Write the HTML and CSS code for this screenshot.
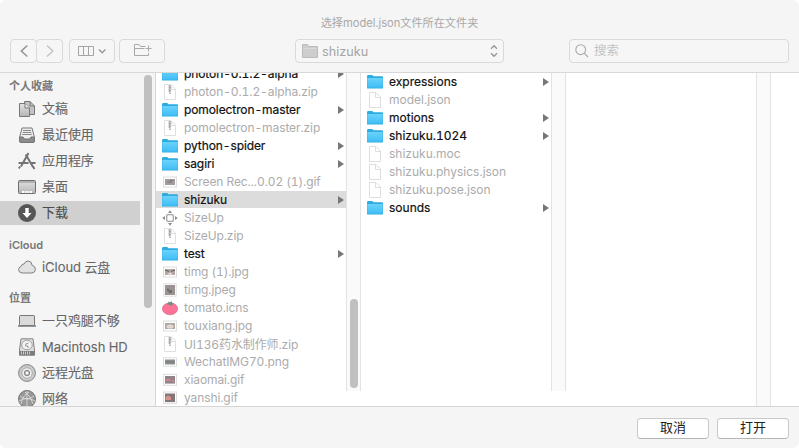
FILE: index.html
```html
<!DOCTYPE html>
<html lang="zh-CN">
<head>
<meta charset="utf-8">
<title>选择model.json文件所在文件夹</title>
<link rel="stylesheet" href="styles.css">
</head>
<body>
<svg class="defs" aria-hidden="true">
  <linearGradient id="blue" x1="0" y1="0" x2="0" y2="1"><stop offset="0" stop-color="#6bd3fb"/><stop offset="1" stop-color="#40bdf5"/></linearGradient>
  <linearGradient id="grey" x1="0" y1="0" x2="0" y2="1"><stop offset="0" stop-color="#e2e2e2"/><stop offset="1" stop-color="#b4b4b4"/></linearGradient>
  <symbol id="folder" viewBox="0 0 16 16"><path d="M0 2.5Q0 1 1 1H5.2L6.6 2.3H15Q16 2.3 16 3.3V14Q16 14.6 15.3 14.6H.7Q0 14.6 0 14Z" fill="#2dacdf"/><path d="M.3 4H15.7V13.7H.3Z" fill="url(#blue)"/></symbol>
  <symbol id="doc" viewBox="0 0 16 16"><path d="M2.500.5H9L13.500 5V15.500H2.500Z" fill="#fff" stroke="#dedede"/><path d="M8.500.8V5.500H13.500" fill="none" stroke="#dedede"/></symbol>
  <symbol id="zip" viewBox="0 0 16 16"><path d="M2.500.5H9L13.500 5V15.500H2.500Z" fill="#fff" stroke="#e0e0e0"/><path d="M9.500.8V5.500H13.500" fill="none" stroke="#dedede"/><path d="M7.500 1V8" stroke="#c4c4c4" stroke-width="2"/><path d="M8 1.500V10.500" stroke="#8e8e8e" stroke-width="1.300" stroke-dasharray="1 .5"/></symbol>
  <symbol id="pic" viewBox="0 0 16 16"><rect x="1.5" y="3" width="13" height="10" fill="#fff" stroke="#dedede"/><rect x="3" y="5" width="10" height="6" fill="#a39c9c"/><path d="M5 8H10M8 6.5H11" stroke="#777"/></symbol>
  <symbol id="pic-eyes" viewBox="0 0 16 16"><rect x="1.5" y="3" width="13" height="10" fill="#fff" stroke="#dedede"/><rect x="3" y="5" width="10" height="6" fill="#b3a7a5"/><path d="M3 6 7 7.5M13 6 9 7.5" stroke="#6d6265" stroke-width="1.2"/><path d="M5 10.5 8 8.5 11 10.5Z" fill="#f4e3df"/></symbol>
  <symbol id="pic-square" viewBox="0 0 16 16"><rect x="1.8" y="1.8" width="12.4" height="12.4" fill="#fff" stroke="#dedede"/><rect x="3" y="3" width="10" height="10" fill="#9b9292"/><path d="M5 6.5H7V8H10V11H6.5V9H5Z" fill="#746b6e"/></symbol>
  <symbol id="pic-face" viewBox="0 0 16 16"><rect x="1.5" y="3" width="13" height="10" fill="#fff" stroke="#dedede"/><rect x="3" y="5" width="10" height="6" fill="#b0a9a3"/><ellipse cx="8" cy="8.5" rx="3.5" ry="2" fill="#e6d8cf"/></symbol>
  <symbol id="pic-wide" viewBox="0 0 16 16"><rect x="1.5" y="3.7" width="13" height="8.5" fill="#fff" stroke="#dedede"/><rect x="3" y="5.5" width="10" height="5" fill="#8c9091"/><path d="M4 8H12" stroke="#747779"/></symbol>
  <symbol id="pic-red" viewBox="0 0 16 16"><rect x="1.5" y="2.3" width="13" height="11" fill="#fff" stroke="#dedede"/><rect x="3" y="4" width="10" height="7.6" fill="#918489"/><path d="M4 8H8.5M10 9H12" stroke="#d5838c" stroke-width="2"/></symbol>
  <symbol id="pic-orange" viewBox="0 0 16 16"><rect x="1.5" y="2" width="13" height="11.6" fill="#fff" stroke="#dedede"/><rect x="3" y="3.5" width="10" height="8.6" fill="#81777b"/><path d="M3.5 10V7L6 5.5 9 7V10Z" fill="#d99289"/></symbol>
  <symbol id="sizeup" viewBox="0 0 16 16"><rect x="4.7" y="4.7" width="6.6" height="6.6" rx="1" fill="#fff" stroke="#a2a2a2" stroke-width="1.3"/><path d="M8 .3 10 3H6ZM8 15.7 6 13h4ZM.2 8 3 6v4ZM15.8 8 13 10V6Z" fill="#8a8a8a"/></symbol>
  <symbol id="tomato" viewBox="0 0 16 16"><ellipse cx="8" cy="8.8" rx="7.7" ry="6" fill="#fb7397" stroke="#c9687f" stroke-width=".6"/><path d="M8 4.800 4.500 4.500 6.500 3 6 1.500 8 2.500 9.500 1 10 3 12 4 9.800 4.500 9 6Z" fill="#5f937c"/></symbol>
</svg>

<div class="dialog">
  <header class="top">
    <h1 class="title">选择model.json文件所在文件夹</h1>
    <div class="toolbar">
      <div class="nav">
        <button class="tool" aria-label="后退"><svg width="24" height="22" viewBox="0 0 24 22"><path d="M15.3 5.5 9.4 11l5.9 5.5" stroke="#999" stroke-width="1.7"/></svg></button>
        <button class="tool" aria-label="前进"><svg width="24" height="22" viewBox="0 0 24 22"><path d="M9 5.5 14.8 11 9 16.5" stroke="#c6c6c6" stroke-width="1.6"/></svg></button>
      </div>
      <button class="tool view" aria-label="分栏"><svg width="44" height="22" viewBox="0 0 44 22"><path d="M8.500 6.500H23.500V15.500H8.500ZM13.500 6.500V15.500M18.500 6.500V15.500" stroke="#a4a4a4"/><path d="M29 9.500 32.200 12.700 35.400 9.500" stroke="#999" stroke-width="1.5"/></svg></button>
      <button class="tool new" aria-label="新建文件夹"><svg width="44" height="22" viewBox="0 0 44 22"><path d="M25.500 6.500H20.500L19 4.500H14.500V15.500H28.500V13M14.500 8.500H24.500M28.500 5.500V11.500M25.500 8.500H31.500" stroke="#a9a9a9"/></svg></button>
      <button class="tool path">
        <svg width="16" height="14" viewBox="0 0 16 14"><path d="M.5 13.500V.5H5.500L7 2.500H15.500V13.500Z" fill="#cdcdcd" stroke="#bcbcbc"/><path d="M1 4.500H15" stroke="#dadada"/></svg>
        <span>shizuku</span>
        <svg class="stepper" width="8" height="14" viewBox="0 0 8 14"><path d="M1 4.700 4 1.700 7 4.700M1 9.300 4 12.300 7 9.300" stroke="#969696" stroke-width="1.4"/></svg>
      </button>
      <label class="tool search">
        <svg width="14" height="14" viewBox="0 0 14 14"><circle cx="5.700" cy="5.700" r="4.900" stroke="#aaa" stroke-width="1.100"/><path d="M9.200 9.200 13 13" stroke="#aaa" stroke-width="1.200"/></svg>
        <span>搜索</span>
      </label>
    </div>
  </header>

  <main class="body">
    <nav class="side">
      <div class="places">
        <h2>个人收藏</h2>
        <a class="place"><svg viewBox="0 0 18 18"><path d="M6.500 1.500H12L16.500 6V14.500H6.500Z" fill="#c4c4c4" stroke="#777"/><path d="M12 1.500V6H16.500" fill="none" stroke="#777"/><path d="M1.500 3.500H7L11.500 8V16.500H1.500Z" fill="url(#grey)" stroke="#777"/><path d="M7 3.500V8H11.500" fill="#eee" stroke="#777"/></svg><span class="cjk">文稿</span></a>
        <a class="place"><svg viewBox="0 0 18 18"><path d="M4 2H14L16.300 11V15.800H1.700V11Z" fill="#eee" stroke="#777"/><path d="M5 4.500H13M4.600 6.500H13.400M4.200 8.500H13.800" stroke="#888"/><path d="M1.700 11H5L6.500 13H11.500L13 11H16.300V15.500Q16.300 16.500 15 16.500H3Q1.700 16.500 1.700 15.500Z" fill="#8c8c8c" stroke="#757575"/></svg><span class="cjk">最近使用</span></a>
        <a class="place"><svg viewBox="0 0 18 18"><path d="M10.500 1 3 14.500M7.700 2.500 15 15M.5 11H10.500M13.500 11H17.500M2 14.500.8 16.500M15 14.500 16.500 17" fill="none" stroke="#737373" stroke-width="2"/></svg><span class="cjk">应用程序</span></a>
        <a class="place"><svg viewBox="0 0 18 18"><rect x=".5" y="2.500" width="17" height="13" rx="1" fill="url(#grey)" stroke="#6e6e6e"/><path d="M1 4H17" stroke="#858585"/><path d="M4 14H14" stroke="#fff" stroke-width="2" stroke-dasharray="2 .7"/></svg><span class="cjk">桌面</span></a>
        <a class="place selected"><svg viewBox="0 0 18 18"><circle cx="9" cy="9" r="9" fill="#565656"/><path d="M7.300 4H10.700V9H13.500L9 14 4.500 9H7.300Z" fill="#fff"/></svg><span class="cjk">下载</span></a>
        <h2 class="cloud">iCloud</h2>
        <a class="place"><svg viewBox="0 0 18 18"><path d="M4 15Q.6 14.700.6 11.600.6 9 3.300 8.300 3.600 5.800 6 6 7.300 2.800 10.300 3 14 3.400 14.200 7.500 17.400 8 17.400 11.400 17.200 14.700 14 15Z" fill="#e2e2e2" stroke="#808080"/></svg>iCloud 云盘</a>
        <h2 class="where">位置</h2>
        <a class="place"><svg viewBox="0 0 18 18"><rect x="1.500" y="3.500" width="15" height="10" rx=".7" fill="#dadada" stroke="#777"/><path d="M0 14H18" stroke="#777" stroke-width="1.500"/></svg><span class="cjk">一只鸡腿不够</span></a>
        <a class="place"><svg viewBox="0 0 18 18"><path d="M3 .8H15L16.500 12V17.300H1.500V12Z" fill="#dedede" stroke="#858585"/><ellipse cx="9" cy="7" rx="5.300" ry="4.800" fill="#f2f2f2" stroke="#a0a0a0"/><path d="M10.500 5Q7 5 7.500 8H10V10" fill="none" stroke="#999"/><path d="M1.500 13H16.500V17H1.500Z" fill="#7b7b7b"/><path d="M3 15H12" stroke="#c8c8c8" stroke-width="3" stroke-dasharray="1 1"/></svg>Macintosh HD</a>
        <a class="place"><svg viewBox="0 0 18 18"><circle cx="9" cy="9" r="8.400" fill="#cbcbcb" stroke="#838383"/><circle cx="9" cy="9" r="5.300" fill="#eee" stroke="#aaa"/><circle cx="9" cy="9" r="2.700" fill="#bbb" stroke="#888"/><circle cx="9" cy="9" r="1.200" fill="#fff"/></svg><span class="cjk">远程光盘</span></a>
        <a class="place"><svg viewBox="0 0 18 18"><circle cx="9" cy="9" r="8.500" fill="#989898" stroke="#777"/><path d="M2 6Q9 12 16 6M9 1V17M3 14Q5 5 11 2M15 14Q13 6 7 2M1 11Q9 6 17 11" fill="none" stroke="#e0e0e0" stroke-width=".8"/></svg><span class="cjk">网络</span></a>
      </div>
      <i class="thumb"></i>
    </nav>

    <section class="column first">
      <ul class="files">
        <li class="dir"><svg><use href="#folder"/></svg>photon-0.1.2-alpha</li>
        <li><svg><use href="#zip"/></svg>photon-0.1.2-alpha.zip</li>
        <li class="dir"><svg><use href="#folder"/></svg>pomolectron-master</li>
        <li><svg><use href="#zip"/></svg>pomolectron-master.zip</li>
        <li class="dir"><svg><use href="#folder"/></svg>python-spider</li>
        <li class="dir"><svg><use href="#folder"/></svg>sagiri</li>
        <li><svg><use href="#pic"/></svg>Screen Rec...0.02 (1).gif</li>
        <li class="dir selected"><svg><use href="#folder"/></svg>shizuku</li>
        <li><svg><use href="#sizeup"/></svg>SizeUp</li>
        <li><svg><use href="#zip"/></svg>SizeUp.zip</li>
        <li class="dir"><svg><use href="#folder"/></svg>test</li>
        <li><svg><use href="#pic-eyes"/></svg>timg (1).jpg</li>
        <li><svg><use href="#pic-square"/></svg>timg.jpeg</li>
        <li><svg><use href="#tomato"/></svg>tomato.icns</li>
        <li><svg><use href="#pic-face"/></svg>touxiang.jpg</li>
        <li><svg><use href="#zip"/></svg>UI136药水制作师.zip</li>
        <li><svg><use href="#pic-wide"/></svg>WechatIMG70.png</li>
        <li><svg><use href="#pic-red"/></svg>xiaomai.gif</li>
        <li><svg><use href="#pic-orange"/></svg>yanshi.gif</li>
      </ul>
      <div class="track"><i class="thumb"></i></div>
    </section>
    <section class="column">
      <ul class="files">
        <li class="dir"><svg><use href="#folder"/></svg>expressions</li>
        <li><svg><use href="#doc"/></svg>model.json</li>
        <li class="dir"><svg><use href="#folder"/></svg>motions</li>
        <li class="dir"><svg><use href="#folder"/></svg>shizuku.1024</li>
        <li><svg><use href="#doc"/></svg>shizuku.moc</li>
        <li><svg><use href="#doc"/></svg>shizuku.physics.json</li>
        <li><svg><use href="#doc"/></svg>shizuku.pose.json</li>
        <li class="dir"><svg><use href="#folder"/></svg>sounds</li>
      </ul>
      <div class="track"></div>
    </section>
    <section class="column">
      <ul class="files"></ul>
      <div class="track full"></div>
    </section>
  </main>

  <footer class="bottom">
    <button class="push">取消</button>
    <button class="push">打开</button>
  </footer>
</div>
</body>
</html>
```
FILE: styles.css
```css
* { box-sizing: border-box; }
body {
  margin: 0;
  background: #fff;
  font-family: Inter, "Noto Sans CJK SC", sans-serif;
  font-variant-numeric: tabular-nums;
}
.defs { position: absolute; width: 0; height: 0; }
button { font: inherit; padding: 0; }
.dialog {
  display: flex;
  flex-direction: column;
  width: 799px;
  height: 448px;
  overflow: hidden;
  border-radius: 6px;
  background: #f5f5f5;
}

.top { flex: 0 0 73px; border-bottom: 1px solid #d8d8d8; }
.title {
  margin: 0;
  padding-top: 15px;
  height: 39px;
  font-size: 11.15px;
  line-height: 17px;
  font-weight: 400;
  text-align: center;
  color: #a8a8a8;
}
.toolbar { display: flex; padding: 0 10px; }
.tool {
  display: flex;
  align-items: center;
  justify-content: center;
  height: 24px;
  border: 1px solid #d9d9d9;
  border-radius: 4px;
  background: #f6f6f6;
}
.tool svg { flex: none; fill: none; }
.nav { display: flex; width: 53px; }
.nav .tool { width: 27px; }
.nav .tool + .tool { margin-left: -1px; }
.view { width: 46px; margin-left: 6px; }
.new { width: 46px; margin-left: 4px; }
.path {
  width: 209px;
  margin-left: 130px;
  padding: 0 5px 0 6px;
  justify-content: flex-start;
  gap: 4px;
  font-size: 12.7px;
  color: #a5a5a5;
}
.stepper { margin-left: auto; }
.search {
  width: 220px;
  margin-left: auto;
  padding-left: 5px;
  justify-content: flex-start;
  gap: 5px;
  font-size: 12.5px;
  line-height: 20px;
  color: #c3c3c3;
}

.body { display: flex; flex: 0 0 333px; overflow: hidden; background: #fff; }
.side {
  display: flex;
  flex: 0 0 156px;
  background: #f5f5f5;
  border-right: 1px solid #d5d5d5;
}
.places { width: 140px; padding-top: 3px; }
.places h2 {
  margin: 0;
  padding-left: 9px;
  height: 21px;
  line-height: 20px;
  font-size: 11px;
  font-weight: 600;
  color: #777;
}
.places .cloud { margin-top: 10px; height: 18px; }
.places .where { margin-top: 8px; height: 20px; line-height: 22px; }
.place {
  display: flex;
  align-items: center;
  gap: 6px;
  height: 24px;
  margin-bottom: 2px;
  padding-left: 18px;
  font-size: 13px;
  line-height: 20px;
  letter-spacing: -.05px;
  color: #666;
  white-space: nowrap;
  -webkit-text-stroke: .1px;
}
.place svg { width: 18px; height: 18px; flex: none; }
.cjk { line-height: 21px; padding-bottom: 1px; }
.place.selected { background: #d0d0d0; color: #4c4c4c; }
.thumb { display: block; width: 8px; border-radius: 4px; background: #c0c0c0; }
.side .thumb { height: 233px; margin: 2px 0 0 4px; }
.cloud + .place { margin-top: 2px; }
.where + .place { margin-top: 2px; }

.column { display: flex; flex: 0 0 205px; }
.files {
  flex: 1;
  margin: 0;
  padding: 0;
  list-style: none;
}
.first .files { margin-top: -8px; letter-spacing: -.1px; }
.files li {
  display: flex;
  align-items: center;
  gap: 6px;
  height: 17px;
  margin-bottom: 1px;
  padding: 0 2px 0 6px;
  font-size: 12px;
  color: #ababab;
  white-space: nowrap;
}
.files svg { width: 16px; height: 16px; flex: none; }
.files .dir { color: #111; -webkit-text-stroke: .2px; }
.files .dir::after {
  content: "";
  margin-left: auto;
  border-left: 6.5px solid #777;
  border-top: 4px solid transparent;
  border-bottom: 4px solid transparent;
}
.files .selected { background: #dcdcdc; }
.track {
  width: 15px;
  height: 318px;
  border: solid #e3e3e3;
  border-width: 0 1px;
  background: #fafafa;
}
.track.full { height: 333px; }
.track .thumb { height: 89px; margin: 226px 0 0 3px; }

.bottom {
  display: flex;
  flex: 1;
  justify-content: flex-end;
  gap: 8px;
  padding: 11px 10px 0 0;
  border-top: 1px solid #d5d5d5;
}
.push {
  width: 72px;
  height: 21px;
  padding-bottom: 3px;
  border: 1px solid #c9c9c9;
  border-bottom-color: #b5b5b5;
  border-radius: 4px;
  background: #fff;
  font-size: 13px;
  line-height: 16px;
  color: #222;
}
```
